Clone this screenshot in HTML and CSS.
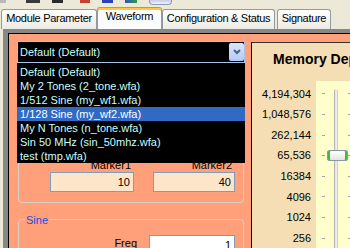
FILE: index.html
```html
<!DOCTYPE html>
<html lang="en">
<head>
    <meta charset="UTF-8">
    <title>Waveform</title>
    <link rel="stylesheet" href="styles.css">
</head>
<body>
    <div class="toolbar">
        <span class="tool tool-grey"></span>
        <span class="tool tool-dark"></span>
        <span class="tool tool-dark2"></span>
        <span class="tool tool-red"></span>
        <span class="tool tool-blue"></span>
        <span class="tool tool-green"></span>
        <span class="tool-btn"></span>
    </div>

    <div class="tabs">
        <div class="tab tab-module">Module Parameter</div>
        <div class="tab tab-wave active">Waveform</div>
        <div class="tab tab-config">Configuration &amp; Status</div>
        <div class="tab tab-sign">Signature</div>
    </div>

    <div class="page">
        <div class="editor">
            <div class="combo">
                <div class="combo-value">Default (Default)</div>
                <div class="combo-btn">
                    <svg width="8" height="6" viewBox="0 0 8 6"><path d="M1 1 L4 4 L7 1" fill="none" stroke="#4d6185" stroke-width="2"/></svg>
                </div>
                <ul class="combo-list">
                    <li>Default (Default)</li>
                    <li>My 2 Tones (2_tone.wfa)</li>
                    <li>1/512 Sine (my_wf1.wfa)</li>
                    <li class="selected">1/128 Sine (my_wf2.wfa)</li>
                    <li>My N Tones (n_tone.wfa)</li>
                    <li>Sin 50 MHz (sin_50mhz.wfa)</li>
                    <li>test (tmp.wfa)</li>
                </ul>
            </div>

            <div class="group markers">
                <div class="field field-m1">
                    <label>Marker1</label>
                    <div class="input">10</div>
                </div>
                <div class="field field-m2">
                    <label>Marker2</label>
                    <div class="input">40</div>
                </div>
            </div>

            <fieldset class="group sine">
                <legend>Sine</legend>
                <div class="row">
                    <label>Freq</label>
                    <div class="input white">1</div>
                </div>
            </fieldset>
        </div>

        <div class="memory">
            <div class="mem-title">Memory Depth</div>
            <div class="mem-body">
                <div class="scale">
                    <div>4,194,304</div>
                    <div>1,048,576</div>
                    <div>262,144</div>
                    <div>65,536</div>
                    <div>16384</div>
                    <div>4096</div>
                    <div>1024</div>
                    <div>256</div>
                </div>
                <div class="track">
                    <div class="ticks">
                        <i></i><i></i><i></i><i></i><i></i><i></i><i></i><i></i>
                    </div>
                    <div class="groove">
                        <div class="thumb"></div>
                    </div>
                    <div class="ticks ticks-right">
                        <i></i><i></i><i></i><i></i><i></i><i></i><i></i><i></i>
                    </div>
                </div>
            </div>
        </div>
    </div>
</body>
</html>
```

FILE: styles.css
```css
* {
    margin: 0;
    padding: 0;
    box-sizing: border-box;
}

body {
    width: 350px;
    height: 248px;
    overflow: hidden;
    background: #ece9d8;
    font-family: 'Liberation Sans', Arial, sans-serif;
    font-size: 11px;
    color: #000;
}

/* toolbar remains at the very top */
.toolbar {
    height: 7px;
    display: flex;
    align-items: flex-start;
}

.tool {
    height: 3px;
    display: block;
}

.tool-grey { width: 6px; margin-left: 0; background: #b8b8b8; }
.tool-dark { width: 14px; margin-left: 20px; background: #3a3a3a; }
.tool-dark2 { width: 11px; margin-left: 12px; background: #2a2a2a; }
.tool-red { width: 10px; margin-left: 17px; background: #c8412e; }
.tool-blue { width: 11px; margin-left: 12px; background: #2a3fb8; }
.tool-green { width: 12px; margin-left: 12px; background: linear-gradient(to right, #3050c8, #3a9a3a); }

.tool-btn {
    width: 23px;
    height: 5px;
    margin-left: 12px;
    border: 1px solid #8a9ab8;
    border-top: none;
    border-radius: 0 0 4px 4px;
    background: linear-gradient(#c9cbe0, #f4f4f8);
}

/* tabs */
.tabs {
    display: flex;
    align-items: flex-end;
    height: 22px;
    padding-left: 1px;
}

.tab {
    height: 20px;
    padding-top: 2px;
    border: 1px solid #919b9c;
    border-bottom: none;
    border-radius: 3px 3px 0 0;
    background: linear-gradient(#fefefe, #ecebe4);
    text-align: center;
    line-height: 13px;
    letter-spacing: -0.3px;
    white-space: nowrap;
}

.tab.active {
    height: 22px;
    padding-top: 2px;
    border-top: 1px solid #e68b2c;
    box-shadow: inset 0 2px 0 #ffc73c;
    background: #fcfcfe;
}

.tab-module { width: 96px; }
.tab-wave { width: 65px; }
.tab-config { width: 113px; }
.tab-sign { width: 54px; margin-left: 2px; }

/* tab page */
.page {
    display: flex;
    width: 347px;
    height: 219px;
    margin-left: 3px;
    overflow: hidden;
    border-top: 4px solid #878787;
    border-left: 5px solid #878787;
    background: #ffa07a;
    box-shadow: inset 1px 1px 0 #000;
}

.editor {
    width: 243px;
    flex-shrink: 0;
    padding: 8px 0 0 9px;
}

.combo {
    position: relative;
    display: flex;
    width: 228px;
    height: 22px;
    border: 1px solid #a7c4e5;
    background: #000;
}

.combo-value {
    flex: 1;
    padding-left: 2px;
    line-height: 20px;
    color: #c8ffff;
}

.combo-btn {
    width: 15px;
    height: 18px;
    margin-top: 1px;
    border-radius: 2px;
    background: linear-gradient(#dbe6fd, #b4c9f6);
    display: flex;
    align-items: center;
    justify-content: center;
}

.combo-list {
    position: absolute;
    top: 21px;
    left: -1px;
    width: 228px;
    height: 100px;
    padding-top: 2px;
    background: #000;
    list-style: none;
    z-index: 2;
}

.combo-list li {
    height: 14px;
    line-height: 14px;
    padding-left: 3px;
    color: #c8ffff;
    white-space: nowrap;
}

.combo-list li.selected {
    background: #316ac5;
    color: #fff;
}

/* group boxes */
.group {
    width: 226px;
    margin-left: 1px;
    border: 1px solid #d6d0c4;
    border-radius: 4px;
}

.markers {
    height: 133px;
    margin-top: 7px;
    display: flex;
    align-items: flex-end;
    gap: 19px;
    padding: 0 0 10px 31px;
}

.field {
    display: flex;
    flex-direction: column;
}

.field label {
    height: 12px;
    line-height: 11px;
    text-align: right;
    padding-right: 3px;
}

.field-m1 { width: 84px; }
.field-m2 { width: 82px; }

.input {
    height: 20px;
    line-height: 18px;
    padding-right: 3px;
    text-align: right;
    border: 1px solid #7f9db9;
    background: #fde5c9;
}

.input.white {
    background: #fff;
}

.sine {
    margin-top: 8px;
    padding: 8px 0 0 0;
    min-width: 0;
}

.sine legend {
    margin-left: 6px;
    padding: 3px 1px 0;
    line-height: 13px;
    color: #1b4fd8;
}

.row {
    display: flex;
}

.row label {
    width: 118px;
    line-height: 16px;
    text-align: right;
}

.row .input {
    width: 86px;
    margin-left: 12px;
}

/* memory depth slider */
.memory {
    flex: 1;
    min-height: 0;
    margin-top: 9px;
    display: flex;
    flex-direction: column;
    border-left: 1px solid #000;
    border-top: 1px solid #333;
    background: #f5deb3;
}

.mem-title {
    flex-shrink: 0;
    height: 38px;
    padding: 8px 0 0 21px;
    font-size: 14px;
    font-weight: bold;
    line-height: 16px;
    white-space: nowrap;
    overflow: hidden;
}

.mem-body {
    flex: 1;
    min-height: 0;
    overflow: hidden;
    display: flex;
}

.scale {
    width: 64px;
    flex-shrink: 0;
    padding: 2.7px 5px 0 0;
    text-align: right;
}

.scale div {
    height: 20.6px;
    line-height: 20.6px;
}

.track {
    flex: 1;
    display: flex;
    background: #ffffcc;
}

.ticks {
    width: 9px;
    flex-shrink: 0;
    padding: 2.7px 0 0 6px;
}

.ticks i {
    display: flex;
    align-items: center;
    height: 20.6px;
}

.ticks i::before {
    content: '';
    width: 3px;
    height: 1px;
    background: #a4a4a4;
}

.ticks-right {
    margin-left: 10px;
    padding-left: 0;
}

.groove {
    position: relative;
    flex-shrink: 0;
    width: 4px;
    margin: 8px 0 0 9px;
    border-radius: 2px 2px 0 0;
    background: linear-gradient(to right, #9c9c9c, #fff 50%, #bcbcbc);
}

.thumb {
    position: absolute;
    top: 61px;
    left: -7px;
    width: 21px;
    height: 11px;
    border: 1px solid #8a98a6;
    border-radius: 2px;
    background: linear-gradient(#ffffff, #e4e4dc);
    box-shadow: inset 2px 0 0 #3fb83f, inset -2px 0 0 #3fb83f;
}
```
